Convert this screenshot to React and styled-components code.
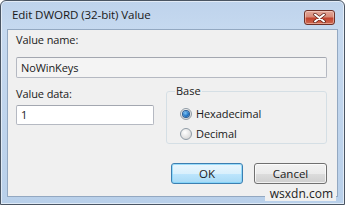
import React from 'react';
import styled, { createGlobalStyle } from 'styled-components';

const Global = createGlobalStyle`
    html, body {
        margin: 0;
        padding: 0;
        background: #ffffff;
    }
    body {
        font-family: "Open Sans", "Noto Sans", sans-serif;
    }
`;

const Window = styled.div`
    position: relative;
    box-sizing: border-box;
    width: 345px;
    height: 205px;
    display: flex;
    flex-direction: column;
    border: 1px solid #4a5563;
    border-radius: 6px 6px 0 0;
    background: linear-gradient(#bed3ec, #c6d9ef 30px, #b9d0ea);
    box-shadow: inset 0 0 0 1px rgba(255, 255, 255, 0.55);
    padding: 0 6px 7px 6px;
    overflow: hidden;
`;

const TitleBar = styled.div`
    height: 28px;
    display: flex;
    align-items: flex-start;
    justify-content: space-between;
`;

const Title = styled.span`
    margin: 5px 0 0 5px;
    font-size: 11.6px;
    line-height: 18px;
    color: #1a1a1a;
    letter-spacing: -0.1px;
`;

const CloseButton = styled.div`
    box-sizing: border-box;
    width: 31px;
    height: 15px;
    margin: 9px 3px 0 0;
    border: 1px solid #6e3128;
    border-radius: 3px;
    background: linear-gradient(#e4a89a, #d78b79 45%, #c2432e 55%, #cf6a52);
    box-shadow: inset 0 0 0 1px rgba(255, 230, 220, 0.45);
    display: flex;
    align-items: center;
    justify-content: center;
`;

const Client = styled.div`
    flex: 1;
    display: flex;
    flex-direction: column;
    background: #f0f0f0;
    border: 1px solid #93a8c1;
    padding: 0 9px 0 8px;
    font-size: 11px;
    color: #1a1a1a;
`;

const Label = styled.div`
    height: 14px;
    line-height: 14px;
    margin-top: ${props => props.top}px;
    letter-spacing: -0.1px;
`;

const TextField = styled.div`
    box-sizing: border-box;
    width: ${props => props.width}px;
    height: ${props => props.height}px;
    margin-top: ${props => props.top}px;
    border: 1px solid #b5b9c2;
    border-top-color: #a3a7b0;
    border-radius: 2px;
    background: ${props => props.readOnly ? '#f4f4f4' : '#ffffff'};
    padding: 0 4px;
    line-height: ${props => props.height - 2}px;
    font-size: 11px;
    letter-spacing: -0.1px;
`;

const DataRow = styled.div`
    display: flex;
    gap: 12px;
    margin-top: 9px;
`;

const Column = styled.div`
    display: flex;
    flex-direction: column;
`;

const GroupBox = styled.fieldset`
    box-sizing: border-box;
    width: 161px;
    height: 60px;
    margin: -3px 0 0 0;
    padding: 9px 0 0 13px;
    border: 1px solid #d5dfe5;
    border-radius: 3px;
    display: flex;
    flex-direction: column;
    gap: 6px;
`;

const Legend = styled.legend`
    padding: 0 1px;
    margin-left: -5px;
    font-size: 11px;
    line-height: 14px;
`;

const RadioRow = styled.label`
    display: flex;
    align-items: center;
    gap: 4px;
    height: 14px;
    line-height: 14px;
    font-size: 11px;
    letter-spacing: -0.1px;
`;

const RadioCircle = styled.span`
    box-sizing: border-box;
    width: 12px;
    height: 12px;
    border-radius: 50%;
    border: 1px solid #8f9ba6;
    background: radial-gradient(circle at 40% 35%, #ffffff, #dcdcdc 70%, #cfcfcf);
    display: flex;
    align-items: center;
    justify-content: center;
`;

const RadioDot = styled.span`
    width: 6px;
    height: 6px;
    border-radius: 50%;
    background: radial-gradient(circle at 40% 35%, #7fc4f4, #1a6fc2 60%, #0d4a8c);
    box-shadow: 0 0 0 1px #2a5d95;
`;

const ButtonRow = styled.div`
    display: flex;
    justify-content: flex-end;
    gap: 11px;
    margin-top: 19px;
    padding-right: 1px;
`;

const Button = styled.div`
    box-sizing: border-box;
    width: ${props => props.width}px;
    height: 21px;
    border-radius: 3px;
    border: 1px solid ${props => props.isDefault ? '#3c7fb1' : '#707070'};
    background: ${props => props.isDefault
        ? 'linear-gradient(#eaf6fd, #d9f0fc 50%, #bee6fd 50%, #a7d9f5)'
        : 'linear-gradient(#f2f2f2, #ebebeb 50%, #dddddd 50%, #cfcfcf)'};
    box-shadow: inset 0 0 0 1px ${props => props.isDefault ? 'rgba(120, 210, 250, 0.7)' : 'rgba(255, 255, 255, 0.7)'};
    display: flex;
    align-items: center;
    justify-content: center;
    font-size: 11.5px;
    color: #1a1a1a;
`;

const Watermark = styled.div`
    position: absolute;
    right: 8px;
    bottom: 3px;
    padding: 0 3px 0 5px;
    height: 15px;
    line-height: 15px;
    background: #f0f0f0;
    font-size: 12px;
    color: #222222;
`;

function CloseGlyph() {
    return (
        <svg width="13" height="10" viewBox="0 0 13 10">
            <path d="M2 1.5 L11 8.5 M11 1.5 L2 8.5" stroke="#5a1d14" strokeWidth="3.4" strokeLinecap="round" />
            <path d="M2 1.5 L11 8.5 M11 1.5 L2 8.5" stroke="#ffffff" strokeWidth="2" strokeLinecap="round" />
        </svg>
    );
}

function Radio({ label, checked }) {
    return (
        <RadioRow>
            <RadioCircle>{checked && <RadioDot />}</RadioCircle>
            {label}
        </RadioRow>
    );
}

export default function App() {
    return (
        <>
            <Global />
            <Window>
                <TitleBar>
                    <Title>Edit DWORD (32-bit) Value</Title>
                    <CloseButton><CloseGlyph /></CloseButton>
                </TitleBar>
                <Client>
                    <Label top={3}>Value name:</Label>
                    <TextField readOnly width={311} height={21} top={10}>NoWinKeys</TextField>
                    <DataRow>
                        <Column>
                            <Label top={0}>Value data:</Label>
                            <TextField width={138} height={20} top={4}>1</TextField>
                        </Column>
                        <GroupBox>
                            <Legend>Base</Legend>
                            <Radio label="Hexadecimal" checked />
                            <Radio label="Decimal" />
                        </GroupBox>
                    </DataRow>
                    <ButtonRow>
                        <Button isDefault width={72}>OK</Button>
                        <Button width={73}>Cancel</Button>
                    </ButtonRow>
                </Client>
                <Watermark>wsxdn.com</Watermark>
            </Window>
        </>
    );
}
